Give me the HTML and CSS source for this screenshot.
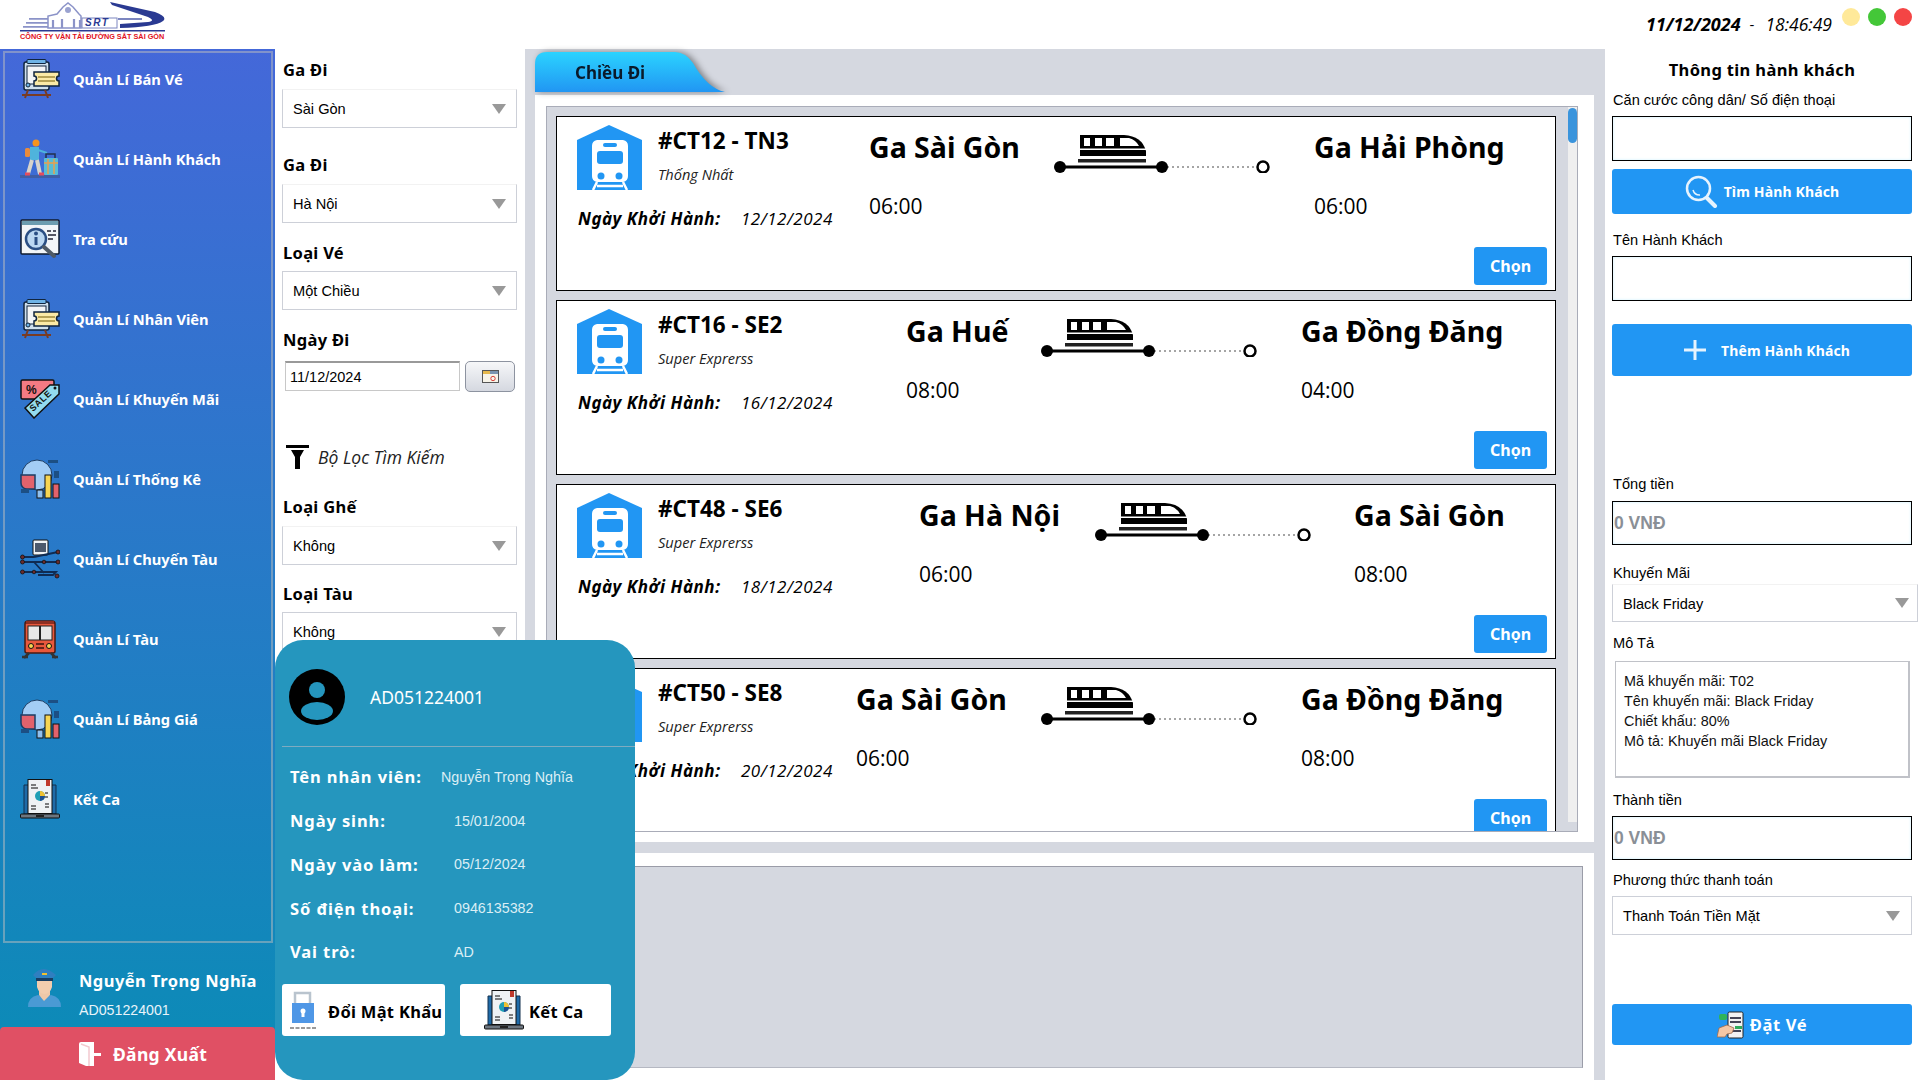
FILE: index.html
```html
<!DOCTYPE html>
<html lang="vi">
<head>
<meta charset="utf-8">
<title>Bán vé</title>
<link rel="stylesheet" href="styles.css">
</head>
<body>
<svg class="defs" width="0" height="0">
<defs>
<symbol id="i-ticket" viewBox="0 0 40 40">
<rect x="4" y="3" width="25" height="28" rx="2" fill="#cfe0ee" stroke="#10253f" stroke-width="1.5"/>
<rect x="7" y="0.5" width="19" height="4" rx="1" fill="#6eb3e6" stroke="#10253f"/>
<rect x="7" y="7" width="19" height="18" fill="#f3f5f7" stroke="#10253f"/>
<circle cx="8" cy="26" r="2" fill="#6eb3e6" stroke="#10253f"/>
<path d="M14 13h25v4a2.500 2.500 0 0 0 0 5v5H14v-5a2.500 2.500 0 0 0 0-5z" fill="#fbeaa6" stroke="#10253f" stroke-width="1.500"/>
<path d="M18 18h17M18 22h17" stroke="#a08a3c" stroke-width="1.500"/>
<path d="M8 31l-3 8M25 31l3 8M2 36h29" stroke="#7a3b22" stroke-width="2" fill="none"/>
</symbol>
<symbol id="i-traveler" viewBox="0 0 40 40">
<rect y="36" width="40" height="3" fill="#3f5ea5"/>
<circle cx="16" cy="4" r="3.500" fill="#f7941d"/>
<rect x="5" y="9" width="5" height="9" rx="1.500" fill="#e98b3c"/>
<path d="M10 8h9v13H10z" fill="#4fb3dc"/>
<path d="M18 11l9 3" stroke="#4fb3dc" stroke-width="2"/>
<path d="M12 21l-4 14M17 21l3 14" stroke="#d8d4cc" stroke-width="4"/>
<path d="M5 35h5M19 35h5" stroke="#e34d5e" stroke-width="3"/>
<path d="M26 19v-4h9v4" fill="none" stroke="#22324f" stroke-width="1.500"/>
<rect x="24" y="19" width="14" height="17" rx="1" fill="#58bdd6"/>
<path d="M24 24h14M28 20v15M34 20v15" stroke="#e8a04e" stroke-width="1.500"/>
</symbol>
<symbol id="i-search" viewBox="0 0 40 40">
<rect x="1" y="1" width="38" height="34" rx="1" fill="#f2f5f8" stroke="#0e1a2e" stroke-width="1.500"/>
<rect x="2" y="2" width="36" height="4" fill="#6d9db0"/>
<circle cx="16" cy="20" r="10" fill="#bcd8f2" stroke="#2b4f84" stroke-width="2.500"/>
<rect x="14.500" y="18" width="3" height="8" fill="#2b4f84"/>
<circle cx="16" cy="14.500" r="2" fill="#2b4f84"/>
<path d="M24 28l10 9" stroke="#4f5a66" stroke-width="4" stroke-linecap="round"/>
<path d="M27 12h4M33 12h3M28 16h8M28 20h5" stroke="#223" stroke-width="1.500"/>
</symbol>
<symbol id="i-sale" viewBox="0 0 40 40">
<rect x="1" y="1" width="33" height="19" rx="1.500" fill="#f37a83" stroke="#111" stroke-width="1.500"/>
<text x="6" y="15" class="tag-pct">%</text>
<path d="M5 29L30 6l9 0 0 9L14 39z" fill="#93dcef" stroke="#111" stroke-width="1.500"/>
<circle cx="35" cy="9" r="1.500" fill="#111"/>
<text x="13" y="33" class="tag-sale" transform="rotate(-43 13 33)">SALE</text>
</symbol>
<symbol id="i-chart" viewBox="0 0 40 40">
<circle cx="17" cy="16" r="15" fill="#a3cdf5" stroke="#1c3c63"/>
<path d="M1 16h14v14H7a6 6 0 0 1-6-6z" fill="#e2626c" stroke="#1c3c63" stroke-width="1.500"/>
<path d="M28 1h10v3H28zM34 12h5v7h-5zM1 30h8v4H1z" fill="#1c4f84"/>
<rect x="17" y="31" width="6" height="8" fill="#8fc0ef" stroke="#111"/>
<rect x="25" y="16" width="6" height="23" fill="#f7d552" stroke="#111"/>
<rect x="33" y="25" width="6" height="14" fill="#e2626c" stroke="#111"/>
</symbol>
<symbol id="i-route" viewBox="0 0 40 40">
<rect x="13" y="1" width="15" height="15" rx="1" fill="#f1f4f6" stroke="#111"/>
<rect x="15" y="4" width="11" height="9" fill="#4d5a6d"/>
<path d="M2 18h12M2 23h36M2 33h34l-3 3H18M14 18l24-5M14 23l10 11" stroke="#0f2b52" stroke-width="1.800" fill="none"/>
<g fill="#6e2b2b" stroke="#111" stroke-width=".8">
<circle cx="2.500" cy="18" r="2"/><circle cx="2.500" cy="23" r="2"/><circle cx="2.500" cy="33" r="2"/>
<circle cx="38" cy="13" r="2"/><circle cx="38" cy="23" r="2"/><circle cx="37" cy="37" r="2"/><circle cx="24" cy="23" r="1.800"/><circle cx="14" cy="33" r="1.800"/>
</g>
</symbol>
<symbol id="i-train" viewBox="0 0 40 40">
<path d="M8 2h24a3 3 0 0 1 3 3v27a2 2 0 0 1-2 2H7a2 2 0 0 1-2-2V5a3 3 0 0 1 3-3z" fill="#e8583c" stroke="#4a1a12" stroke-width="1.500"/>
<rect x="6" y="2" width="28" height="3" fill="#8e2f22"/>
<rect x="8" y="7" width="11.500" height="14" fill="#e8e8e8" stroke="#222"/>
<rect x="20.500" y="7" width="11.500" height="14" fill="#e8e8e8" stroke="#222"/>
<circle cx="11" cy="27" r="2.500" fill="#f7d552" stroke="#111"/>
<circle cx="29" cy="27" r="2.500" fill="#f7d552" stroke="#111"/>
<path d="M16 25h8M16 29h8" stroke="#3a1510" stroke-width="1.500"/>
<path d="M9 34l-5 5M31 34l5 5M2 38h6M32 38h6" stroke="#333" stroke-width="2.500"/>
</symbol>
<symbol id="i-report" viewBox="0 0 40 40">
<path d="M4 6h32v29H4z" fill="#1f6ba8" stroke="#12304e"/>
<rect x="8" y="0.500" width="24" height="34" fill="#eff2f4" stroke="#111"/>
<rect x="26" y="1" width="4" height="6" fill="#c0392b"/>
<path d="M11 6h5M11 9h7M11 27h5M11 30h5M25 14h3M25 18h3M25 25h4M25 28h4" stroke="#555" stroke-width="1.500"/>
<circle cx="20" cy="17" r="5" fill="#1f9fb5"/>
<path d="M20 17V12a5 5 0 0 1 5 5z" fill="#f0c030"/>
<path d="M20 17h5a5 5 0 0 1-5 5z" fill="#1f4f90"/>
<rect x="0.500" y="35" width="39" height="4" rx="1" fill="#6d7680" stroke="#111"/>
<rect x="16" y="36" width="8" height="2" fill="#222"/>
</symbol>
<symbol id="i-house" viewBox="0 0 65 65">
<path d="M0 15L32 0l33 15v50H0z" fill="#2196f3"/>
<path d="M20 15h26a6 6 0 0 1 5 6v30a6 6 0 0 1-5 6H20a6 6 0 0 1-5-6V21a6 6 0 0 1 5-6z" fill="#fff"/>
<rect x="20" y="26" width="26" height="13" rx="3" fill="#2196f3"/>
<rect x="26" y="18" width="14" height="4" rx="2" fill="#2196f3"/>
<circle cx="24" cy="51" r="3.500" fill="#2196f3"/>
<circle cx="42" cy="51" r="3.500" fill="#2196f3"/>
<path d="M20 57l-4 8M46 57l4 8M20 61h26" stroke="#fff" stroke-width="2.500"/>
</symbol>
<symbol id="i-route-line" viewBox="0 0 216 40">
<path d="M26 2H70Q88 3 92 18V23H26Z" fill="#000"/>
<path d="M30 5h6v8h-6zM41 5h7v8h-7zM52 5h8v8h-8zM66 5h9q7 2 10 8H66z" fill="#fff"/>
<rect x="26" y="15.500" width="66" height="1.500" fill="#fff"/>
<rect x="24" y="26" width="68" height="3.500" fill="#222"/>
<path d="M6 34h102" stroke="#000" stroke-width="3"/>
<path d="M108 34h95" stroke="#888" stroke-width="1.500" stroke-dasharray="2 3"/>
<circle cx="6" cy="34" r="6" fill="#000"/>
<circle cx="108" cy="34" r="6" fill="#000"/>
<circle cx="209" cy="34" r="5.500" fill="#fff" stroke="#000" stroke-width="2.500"/>
</symbol>
<symbol id="i-caret" viewBox="0 0 14 10"><path d="M0 0h14L7 10z" fill="#999"/></symbol>
</defs>
</svg>

<div class="app">
  <header class="topbar">
    <div class="logo">
      <svg class="logo-art" viewBox="0 0 145 32" width="145" height="32">
        <path d="M9 17h30v1.800H9zM6 21h34v1.800H6zM3 25h38v1.800H3z" fill="#8b93c8"/>
        <path d="M28 27V15l9-2 6-7 5-4 5 4 6 7 2 2v12z" fill="#fff" stroke="#8b93c8" stroke-width="1.500"/>
        <circle cx="48" cy="9" r="3" fill="#9aa2d0"/>
        <path d="M33 27v-8M42 27v-9M54 27v-9M60 27v-8" stroke="#8b93c8" stroke-width="2.200"/>
        <rect x="62" y="17" width="35" height="10" fill="#fff" stroke="#7c86c0"/>
        <path d="M90 1L135 11Q148 16 143 20Q135 26 100 27V23L128 21Q136 20 128 16L92 4Z" fill="#2a3a92"/>
        <path d="M98 17H122V19H98z" fill="#7c86c0"/>
        <rect x="0" y="29" width="145" height="1.500" fill="#2a3a92"/>
        <text x="65" y="25" class="logo-srt">SRT</text>
      </svg>
      <div class="logo-sub">CÔNG TY VẬN TẢI ĐƯỜNG SẮT SÀI GÒN</div>
    </div>
    <div class="clock"><b>11/12/2024</b><span class="clock-sep">-</span><i>18:46:49</i></div>
    <div class="dots"><span class="dot dot-y"></span><span class="dot dot-g"></span><span class="dot dot-r"></span></div>
  </header>

  <div class="main">
    <aside class="sidebar">
      <nav class="menu">
        <a class="menu-item"><svg class="menu-icon"><use href="#i-ticket"/></svg>Quản Lí Bán Vé</a>
        <a class="menu-item"><svg class="menu-icon"><use href="#i-traveler"/></svg>Quản Lí Hành Khách</a>
        <a class="menu-item"><svg class="menu-icon"><use href="#i-search"/></svg>Tra cứu</a>
        <a class="menu-item"><svg class="menu-icon"><use href="#i-ticket"/></svg>Quản Lí Nhân Viên</a>
        <a class="menu-item"><svg class="menu-icon"><use href="#i-sale"/></svg>Quản Lí Khuyến Mãi</a>
        <a class="menu-item"><svg class="menu-icon"><use href="#i-chart"/></svg>Quản Lí Thống Kê</a>
        <a class="menu-item"><svg class="menu-icon"><use href="#i-route"/></svg>Quản Lí Chuyến Tàu</a>
        <a class="menu-item"><svg class="menu-icon"><use href="#i-train"/></svg>Quản Lí Tàu</a>
        <a class="menu-item"><svg class="menu-icon"><use href="#i-chart"/></svg>Quản Lí Bảng Giá</a>
        <a class="menu-item"><svg class="menu-icon"><use href="#i-report"/></svg>Kết Ca</a>
      </nav>
      <div class="user">
        <svg class="user-avatar" viewBox="0 0 33 40" width="33" height="40">
          <path d="M0 40q0-10 10-12l6 3 7-3q10 2 10 12z" fill="#4a9ad4"/>
          <path d="M11 28l5 6 6-6v-4H11z" fill="#f0c8a8"/>
          <path d="M9 13h15v7q-2 7-7.500 7T9 20z" fill="#f3cdae"/>
          <path d="M5 8q10-12 23 0l-3 3v3H8v-3z" fill="#2f7fc0"/>
          <rect x="8" y="11" width="17" height="3" fill="#173d63"/>
          <rect x="14" y="6" width="5" height="2" fill="#f0c030"/>
        </svg>
        <div class="user-text"><div class="user-name">Nguyễn Trọng Nghĩa</div><div class="user-id">AD051224001</div></div>
      </div>
      <button class="logout">
        <svg viewBox="0 0 23 26" width="23" height="26"><path d="M1 3q0-2 2-2h13v24H8l-7-3z" fill="#fff"/><path d="M3 3l8 3v19" fill="none" stroke="#f3c9cf" stroke-width="1.500"/><path d="M16 12h7v3h-7z" fill="#fff"/></svg>
        Đăng Xuất
      </button>
    </aside>

    <section class="filter">
      <label class="f-label f-first">Ga Đi</label>
      <div class="combo combo-a"><span>Sài Gòn</span><svg class="caret"><use href="#i-caret"/></svg></div>
      <label class="f-label f-l2">Ga Đi</label>
      <div class="combo combo-a"><span>Hà Nội</span><svg class="caret"><use href="#i-caret"/></svg></div>
      <label class="f-label f-l3">Loại Vé</label>
      <div class="combo combo-b"><span>Một Chiều</span><svg class="caret"><use href="#i-caret"/></svg></div>
      <label class="f-label f-l3">Ngày Đi</label>
      <div class="date-row">
        <div class="date-input">11/12/2024</div>
        <button class="date-btn"><svg viewBox="0 0 17 13" width="17" height="13"><rect x=".5" y=".5" width="16" height="12" fill="#f7f3e8" stroke="#555"/><rect x="1" y="1" width="15" height="3" fill="#7a94b0"/><rect x="1" y="1" width="7" height="3" fill="#e6b84c"/><circle cx="11" cy="8.500" r="2.200" fill="none" stroke="#d9433a"/></svg></button>
      </div>
      <div class="filter-head">
        <svg viewBox="0 0 23 24" width="23" height="24"><rect width="23" height="3" fill="#000"/><path d="M5 5h13l-4 7v12H9V12z" fill="#000"/></svg>
        <i>Bộ Lọc Tìm Kiếm</i>
      </div>
      <label class="f-label f-l5">Loại Ghế</label>
      <div class="combo combo-a"><span>Không</span><svg class="caret"><use href="#i-caret"/></svg></div>
      <label class="f-label f-l6">Loại Tàu</label>
      <div class="combo combo-b"><span>Không</span><svg class="caret"><use href="#i-caret"/></svg></div>
    </section>

    <section class="center">
      <div class="tabs"><div class="tab-wrap"><div class="tab">Chiều Đi</div></div></div>
      <div class="pane">
        <div class="list">
          <div class="cards">
            <article class="card t1">
              <div class="c-left">
                <div class="c-head"><svg class="c-icon"><use href="#i-house"/></svg><div><div class="c-code">#CT12 - TN3</div><div class="c-type">Thống Nhất</div></div></div>
                <div class="c-date"><b>Ngày Khởi Hành:</b><i>12/12/2024</i></div>
              </div>
              <div class="c-from"><div class="c-st">Ga Sài Gòn</div><div class="c-time">06:00</div></div>
              <svg class="c-route"><use href="#i-route-line"/></svg>
              <div class="c-to"><div class="c-st">Ga Hải Phòng</div><div class="c-time">06:00</div></div>
              <button class="c-btn">Chọn</button>
            </article>
            <article class="card t2">
              <div class="c-left">
                <div class="c-head"><svg class="c-icon"><use href="#i-house"/></svg><div><div class="c-code">#CT16 - SE2</div><div class="c-type">Super Exprerss</div></div></div>
                <div class="c-date"><b>Ngày Khởi Hành:</b><i>16/12/2024</i></div>
              </div>
              <div class="c-from"><div class="c-st">Ga Huế</div><div class="c-time">08:00</div></div>
              <svg class="c-route"><use href="#i-route-line"/></svg>
              <div class="c-to"><div class="c-st">Ga Đồng Đăng</div><div class="c-time">04:00</div></div>
              <button class="c-btn">Chọn</button>
            </article>
            <article class="card t3">
              <div class="c-left">
                <div class="c-head"><svg class="c-icon"><use href="#i-house"/></svg><div><div class="c-code">#CT48 - SE6</div><div class="c-type">Super Exprerss</div></div></div>
                <div class="c-date"><b>Ngày Khởi Hành:</b><i>18/12/2024</i></div>
              </div>
              <div class="c-from"><div class="c-st">Ga Hà Nội</div><div class="c-time">06:00</div></div>
              <svg class="c-route"><use href="#i-route-line"/></svg>
              <div class="c-to"><div class="c-st">Ga Sài Gòn</div><div class="c-time">08:00</div></div>
              <button class="c-btn">Chọn</button>
            </article>
            <article class="card t4">
              <div class="c-left">
                <div class="c-head"><svg class="c-icon"><use href="#i-house"/></svg><div><div class="c-code">#CT50 - SE8</div><div class="c-type">Super Exprerss</div></div></div>
                <div class="c-date"><b>Ngày Khởi Hành:</b><i>20/12/2024</i></div>
              </div>
              <div class="c-from"><div class="c-st">Ga Sài Gòn</div><div class="c-time">06:00</div></div>
              <svg class="c-route"><use href="#i-route-line"/></svg>
              <div class="c-to"><div class="c-st">Ga Đồng Đăng</div><div class="c-time">08:00</div></div>
              <button class="c-btn">Chọn</button>
            </article>
          </div>
          <div class="scrollbar"><div class="thumb"></div></div>
        </div>
      </div>
      <div class="pane2"><div class="seat-panel"></div></div>
    </section>

    <aside class="right">
      <h2 class="r-title">Thông tin hành khách</h2>
      <div class="r-label r-l1">Căn cước công dân/ Số điện thoại</div>
      <div class="r-input r-i1"></div>
      <button class="r-btn r-b1">
        <svg viewBox="0 0 33 33" width="33" height="33"><circle cx="13.500" cy="13.500" r="11.500" fill="none" stroke="#e6f3fe" stroke-width="2.500"/><path d="M8 15a7 7 0 0 0 7 5" fill="none" stroke="#e6f3fe" stroke-width="1.500"/><path d="M22 23l8 8" stroke="#e6f3fe" stroke-width="4" stroke-linecap="round"/></svg>
        Tìm Hành Khách
      </button>
      <div class="r-label r-l2">Tên Hành Khách</div>
      <div class="r-input r-i1"></div>
      <button class="r-btn r-b2">
        <svg viewBox="0 0 22 20" width="22" height="20"><path d="M11 0v20M0 10h22" stroke="#e6f3fe" stroke-width="3"/></svg>
        Thêm Hành Khách
      </button>
      <div class="r-label r-l3">Tổng tiền</div>
      <div class="r-input r-i2">0 VNĐ</div>
      <div class="r-label r-l4">Khuyến Mãi</div>
      <div class="combo combo-r1"><span>Black Friday</span><svg class="caret"><use href="#i-caret"/></svg></div>
      <div class="r-label r-l5">Mô Tả</div>
      <div class="r-text">Mã khuyến mãi: T02<br>Tên khuyến mãi: Black Friday<br>Chiết khấu: 80%<br>Mô tả: Khuyến mãi Black Friday</div>
      <div class="r-label r-l6">Thành tiền</div>
      <div class="r-input r-i3">0 VNĐ</div>
      <div class="r-label r-l7">Phương thức thanh toán</div>
      <div class="combo combo-r2"><span>Thanh Toán Tiền Mặt</span><svg class="caret"><use href="#i-caret"/></svg></div>
      <button class="r-btn r-b3">
        <svg viewBox="0 0 27 28" width="27" height="28"><rect x="11" y="1" width="15" height="26" rx="1.500" fill="#f2f2f2" stroke="#222"/><path d="M13 7h11M13 11h11M13 20h11" stroke="#445" stroke-width="2"/><rect x="18" y="15" width="7" height="3" fill="#2faa5a"/><rect x="2" y="3" width="8" height="6" rx="2" fill="#2fb35a"/><path d="M0 26l2-9 8-3 7 3-2 5-5 1-2 3z" fill="#f3c7a6" stroke="#a06a4a" stroke-width=".8"/></svg>
        Đặt Vé
      </button>
    </aside>
  </div>

  <div class="popup">
    <div class="p-head">
      <svg viewBox="0 0 56 56" width="56" height="56"><circle cx="28" cy="28" r="28" fill="#000"/><circle cx="28" cy="21" r="8" fill="#2596be"/><ellipse cx="28" cy="42" rx="16" ry="9" fill="#2596be"/></svg>
      <span>AD051224001</span>
    </div>
    <div class="p-row p-row-first"><b>Tên nhân viên:</b><span>Nguyễn Trọng Nghĩa</span></div>
    <div class="p-row"><b>Ngày sinh:</b><span>15/01/2004</span></div>
    <div class="p-row"><b>Ngày vào làm:</b><span>05/12/2024</span></div>
    <div class="p-row"><b>Số điện thoại:</b><span>0946135382</span></div>
    <div class="p-row"><b>Vai trò:</b><span>AD</span></div>
    <div class="p-btns">
      <button class="p-btn p-b1">
        <svg viewBox="0 0 26 40" width="26" height="40"><path d="M5 14V3h15v11" fill="none" stroke="#b9c4ce" stroke-width="2.500"/><rect x="2" y="13" width="22" height="20" fill="#4f97e6"/><circle cx="13" cy="21" r="2.500" fill="#fff"/><rect x="11.500" y="21" width="3" height="6" fill="#fff"/><path d="M0 38h26" stroke="#9a9a9a" stroke-width="2" stroke-dasharray="4 1.500"/></svg>
        <span class="p-txt">Đổi Mật Khẩu</span>
      </button>
      <button class="p-btn p-b2"><svg class="p-report"><use href="#i-report"/></svg><span class="p-txt">Kết Ca</span></button>
    </div>
  </div>
</div>
</body>
</html>
```

FILE: styles.css
```css
* { box-sizing: border-box; }
html, body { margin: 0; padding: 0; background: #fff; }
body { font-family: "Liberation Sans", Arial, sans-serif; color: #000; }
.defs { position: absolute; }
.app { position: relative; width: 1920px; height: 1080px; overflow: hidden; background: #fff; }
button { font: inherit; border: 0; padding: 0; }
.tag-pct { font: 700 12px "Liberation Sans", sans-serif; fill: #111; }
.tag-sale { font: 700 9px "Liberation Sans", sans-serif; fill: #111; letter-spacing: .6px; }

/* top bar */
.topbar { height: 49px; display: flex; align-items: flex-start; }
.logo { width: 145px; margin: 1px 0 0 20px; }
.logo-art { display: block; }
.logo-srt { font: italic 700 10px "Liberation Sans", sans-serif; fill: #2a3a92; letter-spacing: 1.500px; }
.logo-sub { font: 700 7.300px/8px "Liberation Sans", sans-serif; color: #e2101a; white-space: nowrap; }
.clock { margin-left: auto; margin-top: 13px; font: 17px/22px "Open Sans", sans-serif; display: flex; align-items: center; }
.clock b { font-style: italic; font-weight: 700; font-size: 18px; }
.clock-sep { margin: 0 11px 0 9px; font-size: 15px; }
.clock i { font-size: 17.500px; }
.dots { display: flex; gap: 8px; margin: 8px 8px 0 10px; }
.dot { width: 18px; height: 18px; border-radius: 50%; }
.dot-y { background: #ffe999; }
.dot-g { background: #44c738; }
.dot-r { background: #f44545; }

/* main */
.main { display: flex; height: 1031px; }
.sidebar { width: 275px; height: 1031px; background: linear-gradient(180deg, #4468d9 0%, #0a8cb6 100%); display: flex; flex-direction: column; }
.menu { width: 270px; height: 892px; margin: 2px 0 0 3px; border: 2px solid rgba(190,190,190,.5); padding: 6px 0 0 15px; display: flex; flex-direction: column; gap: 40px; }
.menu-item { display: flex; align-items: center; height: 40px; font: 700 14.700px/20px "Noto Sans", sans-serif; color: #fff; white-space: nowrap; }
.menu-icon { width: 40px; height: 40px; margin-right: 13px; flex: none; }
.user { height: 84px; display: flex; padding: 24px 0 0 28px; }
.user-text { margin-left: 18px; margin-top: 6px; color: #fff; }
.user-name { font: 700 16.500px/22px "Noto Sans", sans-serif; letter-spacing: .45px; white-space: nowrap; margin-top: -3px; }
.user-id { font: 14.200px/18px "Liberation Sans", sans-serif; margin-top: 9px; color: #e9f4fa; }
.logout { height: 53px; width: 275px; background: #e05064; color: #fff; border-radius: 4px 4px 0 0; display: flex; align-items: center; padding-left: 78px; gap: 12px; font: 700 17.500px "Noto Sans", sans-serif; letter-spacing: .3px; }

/* filter column */
.filter { width: 250px; padding: 10px 0 0 7px; }
.f-label { display: block; font: 700 16.500px/22px "Noto Sans", sans-serif; letter-spacing: .3px; padding-left: 1px; }
.f-l2 { margin-top: 26px; }
.f-l3 { margin-top: 19px; }
.f-l5 { margin-top: 27px; }
.f-l6 { margin-top: 18px; }
.combo { display: flex; align-items: center; justify-content: space-between; border: 1px solid #cdd0d8; font-size: 14.600px; background: #fff; padding-top: 1px; }
.combo span { padding-left: 10px; }
.caret { width: 14px; height: 10px; margin-right: 10px; margin-top: -1px; }
.combo-a { width: 235px; height: 39px; margin-top: 8px; border-top-color: #f2f2f2; }
.combo-b { width: 235px; height: 39px; margin-top: 7px; }
.date-row { display: flex; margin-top: 10px; padding-left: 3px; gap: 5px; }
.date-input { width: 175px; height: 30px; border: 1px solid #c8c8c8; border-top: 2px solid #999; font-size: 14.500px; line-height: 28px; padding-left: 4px; }
.date-btn { width: 50px; height: 31px; border: 1px solid #8d93a0; border-radius: 5px; background: linear-gradient(180deg, #f6f7f9, #d5d8e0); display: flex; align-items: center; justify-content: center; }
.filter-head { display: flex; align-items: center; height: 24px; margin: 53px 0 0 4px; gap: 9px; }
.filter-head i { font: italic 17.500px/24px "Open Sans", sans-serif; color: #222; }

/* center */
.center { width: 1080px; background: #d5d8e0; padding: 0 11px 0 10px; display: flex; flex-direction: column; }
.tabs { height: 46px; padding-top: 3px; }
.tab-wrap { filter: drop-shadow(3px 0 3px rgba(0,0,0,.4)); width: 192px; }
.tab { width: 190px; height: 40px; background: linear-gradient(180deg, #2bd3ff, #2196f3); clip-path: path("M0 40V12Q0 0 12 0H140Q150 0 158 11Q172 36 190 40Z"); font: 700 17px/42px "Noto Sans", sans-serif; color: #0a1a2a; padding-left: 40px; }
.pane { height: 747px; background: #fff; padding: 11px 0 0 11px; }
.list { width: 1032px; height: 726px; border: 1px solid #a9acb8; background: #d5d8e0; padding: 9px 0 0 9px; display: flex; overflow: hidden; }
.cards { width: 1000px; display: flex; flex-direction: column; gap: 9px; flex: none; }
.card { height: 175px; flex: none; background: #fff; border: 1px solid #000; display: flex; align-items: flex-start; }
.c-left { width: 290px; padding: 8px 0 0 20px; flex: none; }
.c-head { display: flex; }
.c-icon { width: 65px; height: 65px; flex: none; margin-right: 16px; }
.c-code { font: 700 22.500px/26px "Noto Sans", sans-serif; margin-top: 3px; white-space: nowrap; }
.c-type { font: italic 14.600px/20px "Open Sans", sans-serif; margin-top: 10px; color: #222; white-space: nowrap; }
.c-date { display: flex; margin: 18px 0 0 1px; line-height: 22px; white-space: nowrap; }
.c-date b { font: italic 700 17px/22px "Noto Sans", sans-serif; width: 163px; letter-spacing: .5px; }
.c-date i { font: italic 17px/22px "Open Sans", sans-serif; letter-spacing: .5px; }
.c-from, .c-to { padding-top: 12px; white-space: nowrap; }
.c-from { flex: none; }
.c-to { flex: 1 1 0; min-width: 0; }
.c-st { font: 700 28.500px/36px "Noto Sans", sans-serif; }
.c-time { font: 21px/30px "Open Sans", sans-serif; margin-top: 26px; }
.c-route { width: 216px; height: 40px; margin-top: 16px; flex: none; }
.t1 .c-from { margin-left: 22px; width: 185px; }
.t1 .c-to { margin-left: 44px; }
.t2 .c-from { margin-left: 59px; width: 135px; }
.t2 .c-to { margin-left: 44px; }
.t3 .c-from { margin-left: 72px; width: 176px; }
.t3 .c-to { margin-left: 43px; }
.t4 .c-from { margin-left: 9px; width: 185px; }
.t4 .c-to { margin-left: 44px; }
.c-btn { width: 73px; height: 38px; margin: 130px 8px 0 0; background: #2196f3; color: #fff; border-radius: 3px; font: 700 16px/38px "Noto Sans", sans-serif; flex: none; }
.scrollbar { width: 9px; height: 100%; margin: -9px 0 0 12px; background: #efefef; padding-top: 1px; flex: none; }
.thumb { width: 9px; height: 35px; background: #3a94dc; border-radius: 5px; }
.pane2 { margin-top: 11px; height: 227px; background: #fff; padding: 13px 11px 12px 11px; }
.seat-panel { height: 202px; background: #d5d8e0; border: 1px solid #9a9ca8; border-bottom-color: #b5b8c2; }

/* right */
.right { width: 315px; padding: 10px 0 0 7px; }
.r-title { margin: 0; font: 700 16.500px/22px "Noto Sans", sans-serif; text-align: center; width: 300px; letter-spacing: .35px; }
.r-label { font: 14.600px/18px "Liberation Sans", sans-serif; padding-left: 1px; }
.r-l1 { margin-top: 10px; }
.r-l2 { margin-top: 17px; }
.r-l3 { margin-top: 99px; }
.r-l4 { margin-top: 19px; }
.r-l5 { margin-top: 12px; }
.r-l6 { margin-top: 13px; }
.r-l7 { margin-top: 11px; }
.r-input { width: 300px; border: 1px solid #000; box-shadow: inset 0 0 3px #c9f0ff; background: #fff; font: 700 17.500px "Liberation Sans", sans-serif; color: #8a8f96; display: flex; align-items: center; padding-left: 1px; }
.r-i1 { height: 45px; margin-top: 7px; }
.r-i2 { height: 44px; margin-top: 8px; }
.r-i3 { height: 44px; margin-top: 7px; }
.r-btn { display: flex; align-items: center; justify-content: center; width: 300px; background: #2196f3; color: #fff; border-radius: 3px; font: 700 14px "Noto Sans", sans-serif; letter-spacing: .15px; }
.r-b1 { height: 45px; margin-top: 8px; gap: 6px; }
.r-b2 { height: 52px; margin-top: 23px; gap: 15px; padding-left: 10px; }
.r-b3 { height: 41px; margin-top: 69px; gap: 6px; font-size: 16.500px; letter-spacing: .6px; }
.combo-r1 { width: 306px; height: 38px; margin-top: 2px; border-top-color: #f2f2f2; }
.combo-r1 .caret { margin-right: 8px; }
.combo-r2 { width: 300px; height: 39px; margin-top: 7px; }
.combo-r2 .caret { margin-right: 11px; }
.r-text { width: 295px; height: 117px; margin: 9px 0 0 3px; border: 1px solid #c0c2c8; border-width: 1px 2px 2px 1px; padding: 9px 8px; font: 14.400px/20px "Liberation Sans", sans-serif; color: #111; }

/* popup */
.popup { position: absolute; left: 275px; top: 640px; width: 360px; height: 440px; background: #2596be; border-radius: 28px; color: #fff; padding-left: 7px; }
.p-head { height: 107px; margin-bottom: 8px; padding: 29px 0 0 7px; display: flex; border-bottom: 1px solid #7fabc0; font: 17.500px/56px "Noto Sans", sans-serif; }
.p-head span { margin-left: 25px; }
.p-row { height: 43.750px; display: flex; align-items: center; padding-left: 8px; }
.p-row b { width: 164px; font: 700 16.500px "Noto Sans", sans-serif; letter-spacing: .9px; white-space: nowrap; }
.p-row span { font: 14.300px "Liberation Sans", sans-serif; color: #dbeef5; white-space: nowrap; }
.p-row-first b { width: 151px; }
.p-btns { display: flex; gap: 15px; margin-top: 10px; }
.p-btn { height: 52px; background: #fff; border-radius: 3px; display: flex; align-items: center; color: #000; font: 700 16.500px "Noto Sans", sans-serif; letter-spacing: .3px; white-space: nowrap; overflow: hidden; }
.p-txt { margin-top: 3px; }
.p-b1 { width: 163px; padding-left: 8px; gap: 12px; }
.p-b2 { width: 151px; padding-left: 24px; gap: 5px; }
.p-report { width: 40px; height: 40px; flex: none; }
```
